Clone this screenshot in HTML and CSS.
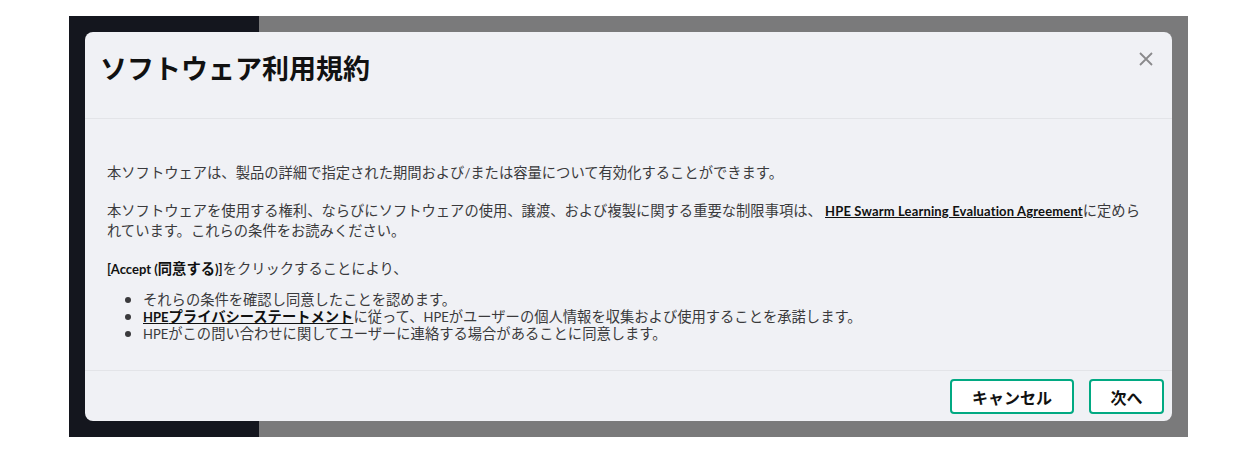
FILE: index.html
```html
<!DOCTYPE html>
<html lang="ja">
<head>
<meta charset="utf-8">
<link rel="stylesheet" href="styles.css">
</head>
<body>
<div class="backdrop">
  <div class="nav"></div>
  <div class="main"></div>
  <div class="modal">
    <div class="modal-header">
      <h1 class="title">ソフトウェア利用規約</h1>
      <button class="close" aria-label="閉じる">
        <svg width="14" height="14" viewBox="0 0 14 14"><path d="M1 1L13 13M13 1L1 13" stroke="#8a8a8c" stroke-width="1.8" fill="none"/></svg>
      </button>
    </div>
    <div class="modal-body">
      <p class="para">本ソフトウェアは、製品の詳細で指定された期間および<span class="lat">/</span>または容量について有効化することができます。</p>
      <p class="para">本ソフトウェアを使用する権利、ならびにソフトウェアの使用、譲渡、および複製に関する重要な制限事項は、 <a class="link lat wide" href="#">HPE Swarm Learning Evaluation Agreement</a>に定められています。これらの条件をお読みください。</p>
      <p class="para"><b class="accept"><span class="lat">[Accept (</span>同意する<span class="lat">)]</span></b>をクリックすることにより、</p>
      <ul class="list">
        <li>それらの条件を確認し同意したことを認めます。</li>
        <li><a class="link" href="#"><span class="lat">HPE</span>プライバシーステートメント</a>に従って、<span class="lat">HPE</span>がユーザーの個人情報を収集および使用することを承諾します。</li>
        <li><span class="lat">HPE</span>がこの問い合わせに関してユーザーに連絡する場合があることに同意します。</li>
      </ul>
    </div>
    <div class="modal-footer">
      <button class="btn btn-cancel">キャンセル</button>
      <button class="btn btn-next">次へ</button>
    </div>
  </div>
</div>
</body>
</html>
```

FILE: styles.css
```css
html, body {
  margin: 0;
  padding: 0;
  background: #ffffff;
}
body {
  font-family: "Noto Sans CJK JP", sans-serif;
  color: #3a3a3c;
}
.backdrop {
  position: relative;
  margin: 16px 0 0 69px;
  width: 1119px;
  height: 421px;
  display: flex;
}
.nav {
  width: 190px;
  background: #14161e;
}
.main {
  flex: 1;
  background: #7a7a7b;
}
.modal {
  position: absolute;
  left: 16px;
  top: 16px;
  width: 1087px;
  height: 389px;
  background: #f0f1f5;
  border-radius: 8px;
  display: flex;
  flex-direction: column;
  overflow: hidden;
}
.modal-header {
  height: 86px;
  border-bottom: 1px solid #e3e4e8;
  display: flex;
  align-items: flex-start;
  justify-content: space-between;
  padding: 0 19px 0 15px;
  flex-shrink: 0;
}
.title {
  margin: 18px 0 0 0;
  font-family: "Noto Sans CJK JP", sans-serif;
  font-size: 27px;
  line-height: 36px;
  font-weight: 700;
  color: #111111;
}
.close {
  margin-top: 20px;
  padding: 0;
  border: 0;
  background: transparent;
  width: 14px;
  height: 14px;
  display: flex;
}
.modal-body {
  height: 252px;
  flex-shrink: 0;
  box-sizing: border-box;
  border-bottom: 1px solid #e3e4e8;
  padding: 43px 22px 0 22px;
  font-size: 14.3px;
}
.lat {
  font-family: Lato, "Noto Sans CJK JP", sans-serif;
  font-size: 13px;
  line-height: 1;
}
.wide {
  letter-spacing: 0.15px;
}
.para {
  margin: 0 0 18px 0;
  line-height: 20px;
}
.link {
  color: #111111;
  font-weight: 700;
  text-decoration: underline;
}
.accept {
  color: #111111;
  font-weight: 700;
}
.list {
  margin: -6px 0 0 0;
  padding-left: 36px;
  line-height: 17px;
}
.modal-footer {
  flex: 1;
  display: flex;
  justify-content: flex-end;
  align-items: flex-start;
  gap: 15px;
  padding: 8px 8px 0 0;
}
.btn {
  height: 35px;
  background: #ffffff;
  border: 2px solid #01a982;
  border-radius: 4px;
  font-family: "Noto Sans CJK JP", sans-serif;
  font-size: 16px;
  font-weight: 700;
  color: #111111;
  padding: 0;
}
.btn-cancel {
  width: 124px;
}
.btn-next {
  width: 75px;
}
```
